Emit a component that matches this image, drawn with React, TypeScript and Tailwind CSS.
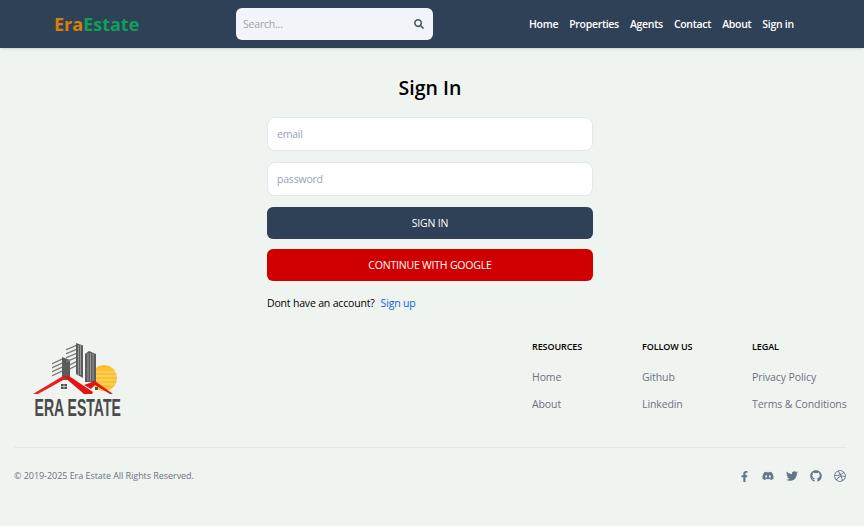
import React from 'react';
import { FaSearch, FaFacebookF, FaDiscord, FaTwitter, FaGithub, FaDribbble } from 'react-icons/fa';

const navLinks = ['Home', 'Properties', 'Agents', 'Contact', 'About', 'Sign in'];

const footerColumns = [
  { title: 'RESOURCES', width: 'w-[110px]', links: ['Home', 'About'] },
  { title: 'FOLLOW US', width: 'w-[110px]', links: ['Github', 'Linkedin'] },
  { title: 'LEGAL', width: 'w-[94px]', links: ['Privacy Policy', 'Terms & Conditions'] },
];

// viewBox uses page coordinates so shapes can be read straight off the reference
const LogoMark: React.FC = () => (
  <svg viewBox="30 340 96 56" className="w-[96px] h-[56px] block">
    {/* Sun */}
    <circle cx="104" cy="378" r="13" fill="#fcc02e" />
    <path d="M96 372h22M96 376h22M96 380h22M96 384h22" stroke="#f0f4f1" strokeWidth="0.5" />
    {/* Left building */}
    <path d="M52 363l11-5v1.6l-11 5zM52 367l11-5v1.6l-11 5zM52 371l11-5v1.6l-11 5zM52 375l11-5v1.6l-11 5z" fill="#7d7d7d" />
    <path d="M62 357l8 3v20h-8z" fill="#5c5c5c" />
    {/* Middle building */}
    <path d="M66 349l12-5v1.6l-12 5zM66 353l12-5v1.6l-12 5zM66 357l12-5v1.6l-12 5zM66 361l12-5v1.6l-12 5zM70 364l8-4v1.6l-8 4zM70 368l8-4v1.6l-8 4z" fill="#7d7d7d" />
    <path d="M76 343l7 2.5V378l-7-4z" fill="#5c5c5c" />
    <path d="M78.5 345v30M80.5 345v30" stroke="#d5d8d5" strokeWidth="0.5" />
    {/* Right building */}
    <path d="M85 354l4-3 7 3v28h-11z" fill="#5c5c5c" />
    <path d="M88 353v28M90.5 353v28M93 353v28" stroke="#d5d8d5" strokeWidth="0.5" />
    {/* Roofs */}
    <path d="M33 394l30-18 2 3-27 15z" fill="#ee1c1c" />
    <path d="M63 376h6l24 16-1 2h-8z" fill="#e31313" />
    <path d="M84 385l11-4 18 13h-3l-15-9-4 4z" fill="#e31313" />
    {/* Windows */}
    <rect x="61" y="384" width="6" height="5" fill="#4f4f4f" />
    <path d="M61 386.5h6M64 384v5" stroke="#f0f4f1" strokeWidth="0.6" />
    <rect x="95" y="387" width="3" height="3" fill="#4f4f4f" />
  </svg>
);

const App: React.FC = () => {
  return (
    <div className="min-h-[526px] bg-[#f0f4f1] font-['Open_Sans',sans-serif] overflow-hidden">
      {/* Header */}
      <header className="h-12 bg-[#2f4156] shadow-sm flex items-center">
        <h1 className="ml-[54px] w-[182px] text-[18px] font-bold leading-none">
          <span className="text-[#d97f06]">Era</span>
          <span className="text-[#0e9f58]">Estate</span>
        </h1>
        <form className="w-[197px] h-8 bg-[#f1f5f9] rounded-md flex items-center justify-between pl-[7px] pr-[9px]">
          <input
            placeholder="Search..."
            className="w-[150px] pt-px bg-transparent text-[10.5px] tracking-[-0.2px] text-gray-700 placeholder:text-[#9ca3af] outline-none"
          />
          <FaSearch className="w-[10px] h-[10px] text-[#475569]" />
        </form>
        <nav className="ml-[96px] flex gap-[11px]">
          {navLinks.map((link) => (
            <a key={link} className="text-[10.5px] tracking-[-0.3px] font-semibold text-white leading-none">
              {link}
            </a>
          ))}
        </nav>
      </header>

      {/* Sign in form */}
      <main className="w-[860px] pt-7">
        <div className="w-[326px] mx-auto">
          <h2 className="text-[19.5px] font-semibold text-black text-center leading-6">Sign In</h2>
          <form className="mt-[17px] flex flex-col gap-[11px]">
            <input
              placeholder="email"
              className="h-[34px] bg-white border border-[#e2e8f0] rounded-lg px-[9px] text-[10.5px] tracking-[-0.2px] placeholder:text-[#94a3b8] outline-none"
            />
            <input
              placeholder="password"
              className="h-[34px] bg-white border border-[#e2e8f0] rounded-lg px-[9px] text-[10.5px] tracking-[-0.2px] placeholder:text-[#94a3b8] outline-none"
            />
            <button type="button" className="h-8 pt-px bg-[#2f4156] rounded-md text-[10.5px] tracking-[-0.2px] text-white">
              SIGN IN
            </button>
            <button type="button" className="-mt-px h-8 pt-px bg-[#d00000] rounded-md text-[10.5px] tracking-[-0.2px] text-white">
              CONTINUE WITH GOOGLE
            </button>
          </form>
          <div className="mt-[15px] flex gap-[6px] text-[10.5px] tracking-[-0.18px] leading-[14px]">
            <p className="text-black">Dont have an account?</p>
            <a className="text-[#0b5ed7]">Sign up</a>
          </div>
        </div>
      </main>

      {/* Footer */}
      <footer className="w-[860px] px-[14px] mt-[29px]">
        <div className="flex justify-between">
          <div className="ml-[16px] mt-[1px] flex flex-col items-center w-[96px]">
            <LogoMark />
            <span className="mt-[2px] text-[23px] font-bold text-[#4a4a4a] leading-[20px] font-['Liberation_Sans',sans-serif] scale-x-[0.61] whitespace-nowrap">
              ERA ESTATE
            </span>
          </div>
          <div className="flex">
            {footerColumns.map((col) => (
              <div key={col.title} className={col.width}>
                <h3 className="text-[9px] tracking-[-0.1px] font-semibold text-black leading-3 mt-[2px]">{col.title}</h3>
                <ul className="mt-[16px] flex flex-col gap-[11px]">
                  {col.links.map((link) => (
                    <li key={link} className="text-[10.5px] tracking-[-0.1px] text-[#6b7280] leading-4 whitespace-nowrap">
                      {link}
                    </li>
                  ))}
                </ul>
              </div>
            ))}
          </div>
        </div>

        <div className="mt-[29px] border-t border-[#e5e7eb] pt-[20px] flex items-center justify-between">
          <p className="text-[9px] tracking-[-0.05px] text-[#6b7280] leading-4">© 2019-2025 Era Estate All Rights Reserved.</p>
          <div className="flex items-center gap-3 text-[#64748b]">
            <FaFacebookF className="w-[11px] h-[11px]" />
            <FaDiscord className="w-3 h-3" />
            <FaTwitter className="w-3 h-3" />
            <FaGithub className="w-3 h-3" />
            <FaDribbble className="w-3 h-3" />
          </div>
        </div>
      </footer>
    </div>
  );
};

export default App;
